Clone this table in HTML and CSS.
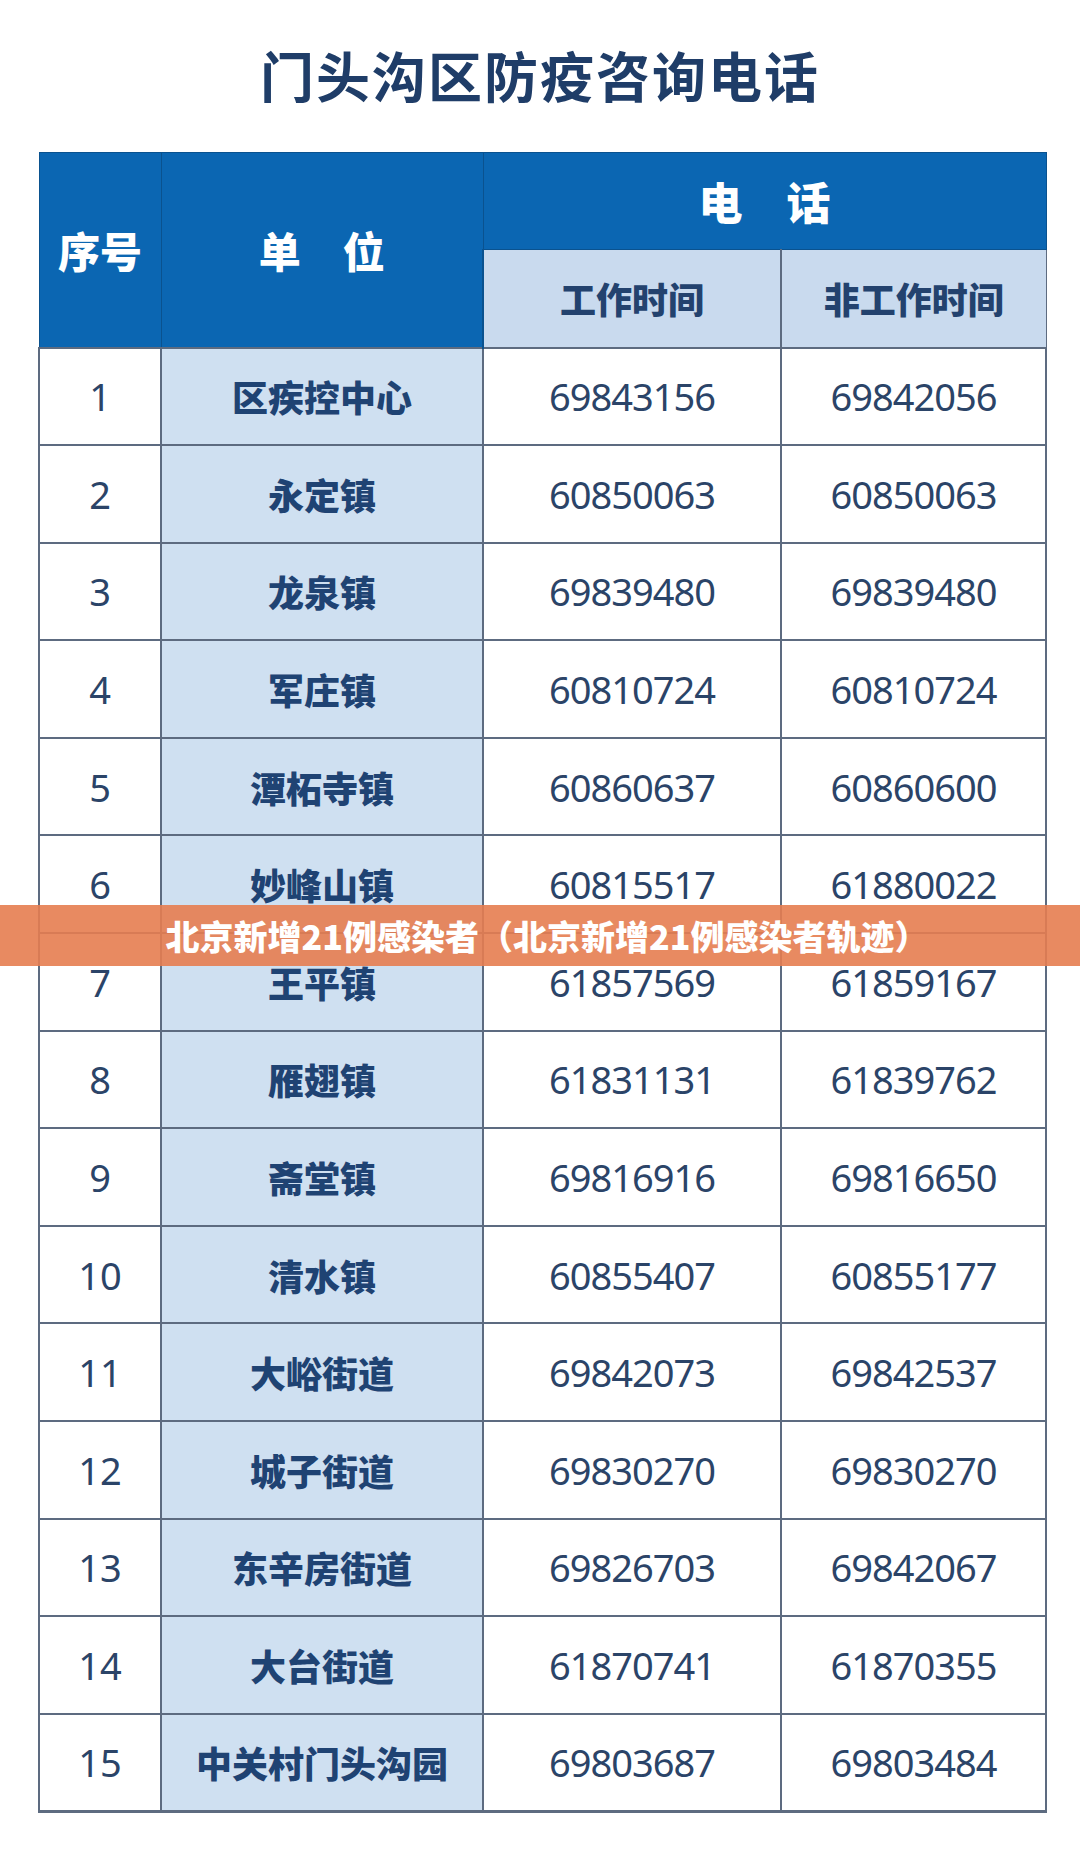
FILE: index.html
```html
<!DOCTYPE html>
<html lang="zh">
<head>
<meta charset="utf-8">
<title>门头沟区防疫咨询电话</title>
<link rel="stylesheet" href="styles.css">
</head>
<body>
<div class="page">
  <h1 class="title">门头沟区防疫咨询电话</h1>
  <table class="phones">
    <colgroup>
      <col class="c-no"><col class="c-unit"><col class="c-work"><col class="c-off">
    </colgroup>
    <thead>
      <tr class="h1">
        <th rowspan="2" class="hd-blue hd-no">序号</th>
        <th rowspan="2" class="hd-blue hd-unit">单&emsp;位</th>
        <th colspan="2" class="hd-blue hd-tel">电&emsp;话</th>
      </tr>
      <tr class="h2">
        <th class="hd-light">工作时间</th>
        <th class="hd-light">非工作时间</th>
      </tr>
    </thead>
    <tbody>
      <tr><td class="no">1</td><td class="unit">区疾控中心</td><td class="num">69843156</td><td class="num">69842056</td></tr>
      <tr><td class="no">2</td><td class="unit">永定镇</td><td class="num">60850063</td><td class="num">60850063</td></tr>
      <tr><td class="no">3</td><td class="unit">龙泉镇</td><td class="num">69839480</td><td class="num">69839480</td></tr>
      <tr><td class="no">4</td><td class="unit">军庄镇</td><td class="num">60810724</td><td class="num">60810724</td></tr>
      <tr><td class="no">5</td><td class="unit">潭柘寺镇</td><td class="num">60860637</td><td class="num">60860600</td></tr>
      <tr><td class="no">6</td><td class="unit">妙峰山镇</td><td class="num">60815517</td><td class="num">61880022</td></tr>
      <tr><td class="no">7</td><td class="unit">王平镇</td><td class="num">61857569</td><td class="num">61859167</td></tr>
      <tr><td class="no">8</td><td class="unit">雁翅镇</td><td class="num">61831131</td><td class="num">61839762</td></tr>
      <tr><td class="no">9</td><td class="unit">斋堂镇</td><td class="num">69816916</td><td class="num">69816650</td></tr>
      <tr><td class="no">10</td><td class="unit">清水镇</td><td class="num">60855407</td><td class="num">60855177</td></tr>
      <tr><td class="no">11</td><td class="unit">大峪街道</td><td class="num">69842073</td><td class="num">69842537</td></tr>
      <tr><td class="no">12</td><td class="unit">城子街道</td><td class="num">69830270</td><td class="num">69830270</td></tr>
      <tr><td class="no">13</td><td class="unit">东辛房街道</td><td class="num">69826703</td><td class="num">69842067</td></tr>
      <tr><td class="no">14</td><td class="unit">大台街道</td><td class="num">61870741</td><td class="num">61870355</td></tr>
      <tr><td class="no">15</td><td class="unit">中关村门头沟园</td><td class="num">69803687</td><td class="num">69803484</td></tr>
    </tbody>
  </table>
  <div class="banner">北京新增21例感染者（北京新增21例感染者轨迹）</div>
</div>
</body>
</html>
```

FILE: styles.css
```css
html, body {
  margin: 0;
  padding: 0;
  background: #ffffff;
}
.page {
  position: relative;
  width: 1080px;
  height: 1873px;
  overflow: hidden;
  font-family: "Noto Sans", "Noto Sans CJK SC", sans-serif;
}
.title {
  margin: 0;
  height: 152px;
  display: flex;
  align-items: center;
  justify-content: center;
  padding-bottom: 4px;
  box-sizing: border-box;
  font-family: "Noto Sans CJK SC", sans-serif;
  font-weight: 700;
  font-size: 54px;
  letter-spacing: 2px;
  color: #1f3d68;
}
.phones {
  margin-left: 38px;
  width: 1007px;
  border-collapse: collapse;
  table-layout: fixed;
  border-bottom: 3px solid #5d6b80;
}
.c-no { width: 122px; }
.c-unit { width: 322px; }
.c-work { width: 298px; }
.c-off { width: 265px; }
.phones th, .phones td {
  padding: 0;
  text-align: center;
  vertical-align: middle;
}
.h1 { height: 97px; }
.h2 { height: 98px; }
.hd-blue {
  background: #0b66b2;
  color: #ffffff;
  font-family: "Noto Sans CJK SC", sans-serif;
  font-weight: 900;
  border: 1px solid #0a528f;
}
.hd-no { font-size: 42px; }
.hd-unit { font-size: 42px; }
.hd-tel { font-size: 44px; padding-bottom: 6px; }
.hd-light {
  background: #c9daee;
  color: #23426e;
  font-family: "Noto Sans CJK SC", sans-serif;
  font-weight: 900;
  font-size: 36px;
  border-left: 2px solid #5d6b80;
  border-right: 1px solid #5d6b80;
}
.h2 .hd-light:first-child { border-left: 2px solid #0a528f; }
tbody tr { height: 97.6px; }
tbody td {
  border: 2px solid #5d6b80;
}
.no {
  font-size: 38px;
  color: #2b4468;
}
.unit {
  background: #cfe0f1;
  font-family: "Noto Sans CJK SC", sans-serif;
  font-weight: 900;
  font-size: 36px;
  color: #1f4373;
}
.num {
  font-size: 38px;
  letter-spacing: -1px;
  color: #2b4468;
}
.banner {
  position: absolute;
  left: 0;
  top: 905px;
  width: 100%;
  height: 61px;
  background: rgba(230, 125, 80, 0.9);
  color: #ffffff;
  font-family: "Noto Sans CJK SC", sans-serif;
  font-weight: 900;
  font-size: 34px;
  display: flex;
  align-items: center;
  justify-content: center;
  padding-left: 14px;
  box-sizing: border-box;
}
```
